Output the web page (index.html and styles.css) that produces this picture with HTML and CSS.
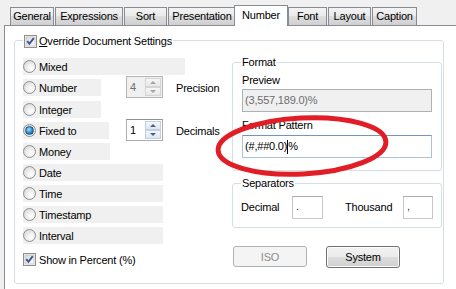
FILE: index.html
```html
<!DOCTYPE html>
<html>
<head>
<meta charset="utf-8">
<link rel="stylesheet" href="styles.css">
</head>
<body>
<div class="tabs">
  <div class="tab t-general">General</div>
  <div class="tab t-expr">Expressions</div>
  <div class="tab t-sort">Sort</div>
  <div class="tab t-pres">Presentation</div>
  <div class="tab sel t-num">Number</div>
  <div class="tab t-font">Font</div>
  <div class="tab t-layout">Layout</div>
  <div class="tab t-caption">Caption</div>
</div>
<div class="page">
  <div class="group outer">
    <div class="gtitle otitle">
      <svg class="check" width="13" height="13" viewBox="0 0 13 13"><defs><linearGradient id="cg" x1="0" y1="0" x2="1" y2="1"><stop offset="0" stop-color="#d9d9d9"/><stop offset="1" stop-color="#fbfbfb"/></linearGradient></defs><rect x="0.5" y="0.5" width="12" height="12" fill="#f4f4f4" stroke="#8f8f8f"/><rect x="2" y="2" width="9" height="9" fill="url(#cg)" stroke="#b9b9b9" stroke-width="0.6"/><path d="M3.3 6.2 L5.4 8.8 L9.8 3.2" fill="none" stroke="#3a5596" stroke-width="1.9"/></svg>
      <span><u>O</u>verride Document Settings</span>
    </div>
    <div class="left">
      <div class="row"><div class="opt w-mixed"><span class="radio"></span>Mixed</div></div>
      <div class="row spinrow mb1">
        <div class="opt w-num"><span class="radio"></span>Number</div>
        <div class="spin off"><span class="val">4</span><span class="btns"><span class="sbtn up"></span><span class="sbtn dn"></span></span></div>
        <span>Precision</span>
      </div>
      <div class="row"><div class="opt w-num"><span class="radio"></span>Integer</div></div>
      <div class="row spinrow">
        <div class="opt w-fixed"><span class="radio on"></span>Fixed to</div>
        <div class="spin"><span class="val">1</span><span class="btns"><span class="sbtn up"></span><span class="sbtn dn"></span></span></div>
        <span>Decimals</span>
      </div>
      <div class="row"><div class="opt w-money"><span class="radio"></span>Money</div></div>
      <div class="row"><div class="opt w-date"><span class="radio"></span>Date</div></div>
      <div class="row"><div class="opt w-date"><span class="radio"></span>Time</div></div>
      <div class="row"><div class="opt w-date"><span class="radio"></span>Timestamp</div></div>
      <div class="row"><div class="opt w-date"><span class="radio"></span>Interval</div></div>
      <div class="row pct">
        <svg class="check" width="13" height="13" viewBox="0 0 13 13"><rect x="0.5" y="0.5" width="12" height="12" fill="#f4f4f4" stroke="#8f8f8f"/><rect x="2" y="2" width="9" height="9" fill="url(#cg)" stroke="#b9b9b9" stroke-width="0.6"/><path d="M3.3 6.2 L5.4 8.8 L9.8 3.2" fill="none" stroke="#3a5596" stroke-width="1.9"/></svg>
        <span>Show in Percent (%)</span>
      </div>
    </div>
    <div class="right">
      <div class="group fmt">
        <div class="gtitle">Format</div>
        <div class="lbl">Preview</div>
        <div class="box ro box1">(3,557,189.0)%</div>
        <div class="lbl lbl2">Format Pattern</div>
        <div class="box pat">(#,##0.0)<span class="caret"></span>%</div>
      </div>
      <div class="group sep">
        <div class="gtitle">Separators</div>
        <span class="slbl l-dec">Decimal</span>
        <span class="sbox b-dec">.</span>
        <span class="slbl l-th">Thousand</span>
        <span class="sbox b-th">,</span>
      </div>
      <div class="btnrow">
        <div class="pbtn iso">ISO</div>
        <div class="pbtn sys">System</div>
      </div>
    </div>
  </div>
</div>
<svg class="annot" width="456" height="289" viewBox="0 0 456 289"><ellipse cx="302" cy="146" rx="84" ry="28" fill="none" stroke="#e11d26" stroke-width="5" transform="rotate(-3 302 146)"/></svg>
</body>
</html>
```
FILE: styles.css
```css
* { box-sizing: border-box; }
html, body { margin: 0; height: 289px; overflow: hidden; }
body {
  background: #f0f0f0;
  font: 11px "Liberation Sans", Arial, sans-serif;
  letter-spacing: -0.2px;
  color: #000;
  position: relative;
}
.tabs {
  display: flex;
  align-items: flex-end;
  height: 25px;
  padding-left: 10px;
}
.tab {
  height: 18px;
  border: 1px solid #898c95;
  border-bottom: 0;
  margin-right: 1px;
  background: linear-gradient(#f3f3f3, #ebebeb 45%, #dedede 50%, #d0d0d0);
  display: flex;
  align-items: center;
  justify-content: center;
  line-height: 1;
}
.t-general { width: 44px; }
.t-expr { width: 68px; }
.t-sort { width: 43px; }
.t-pres { width: 68px; }
.t-num { width: 54px; }
.t-font { width: 39px; }
.t-layout { width: 43px; }
.t-caption { width: 45px; }
.tab.sel {
  height: 21px;
  margin: 0 0 -1px -3px;
  background: #fff;
  position: relative;
  z-index: 1;
  padding-bottom: 2px;
}
.page {
  margin-left: 4px;
  border-top: 1px solid #898c95;
  border-left: 1px solid #898c95;
  background: #fff;
  height: 264px;
  padding: 14px 0 0 9px;
}
.group {
  border: 1px solid #d5dfe5;
  border-radius: 3px;
  position: relative;
}
.outer {
  width: 430px;
  height: 244px;
  display: flex;
  align-items: flex-start;
}
.gtitle {
  position: absolute;
  top: -7px;
  left: 8px;
  padding: 0 1px;
  background: #fff;
  height: 13px;
  line-height: 13px;
  display: flex;
  align-items: center;
  gap: 2px;
}
.otitle { top: -6px; }
.check { display: block; flex: none; }
.left {
  width: 217px;
  padding: 17px 0 0 8px;
  display: flex;
  flex-direction: column;
  gap: 4px;
}
.row {
  height: 17px;
  display: flex;
  align-items: center;
}
.mb1 { margin-bottom: 1px; }
.spinrow {
  display: grid;
  grid-template-columns: 90px 37px auto;
  column-gap: 13px;
  align-items: center;
}
.opt {
  height: 17px;
  background: #f0f0f0;
  display: flex;
  align-items: center;
  gap: 3px;
}
.w-mixed { width: 162px; }
.w-num { width: 78px; }
.w-fixed { width: 86px; }
.w-money { width: 87px; }
.w-date { width: 140px; }
.radio {
  width: 13px;
  height: 13px;
  flex: none;
  border-radius: 50%;
  border: 1px solid #8e8f8f;
  background: radial-gradient(circle at 65% 65%, #ffffff 0, #f1f1f1 35%, #cfcfcf 100%);
  position: relative;
  display: flex;
  align-items: center;
  justify-content: center;
}
.radio.on::after {
  content: "";
  width: 7px;
  height: 7px;
  border-radius: 50%;
  background: radial-gradient(circle at 40% 35%, #a9e0fb 0, #3b9ad8 45%, #0f4f8a 100%);
  border: 1px solid #1e4f7c;
}
.spin {
  height: 22px;
  margin: -3px 0 -2px;
  display: flex;
  border: 1px solid #abadb3;
  border-top-color: #8d9096;
  background: #fff;
  padding: 1px;
}
.spin .val {
  flex: 1;
  padding-left: 2px;
  line-height: 18px;
}
.spin .btns {
  width: 16px;
  display: flex;
  flex-direction: column;
}
.sbtn {
  flex: 1;
  border: 1px solid #c3cfdc;
  background: linear-gradient(#f3f7fb, #dce7f3);
  display: flex;
  align-items: center;
  justify-content: center;
}
.sbtn.up::after {
  content: "";
  border-left: 3px solid transparent;
  border-right: 3px solid transparent;
  border-bottom: 3px solid #4b5f86;
}
.sbtn.dn::after {
  content: "";
  border-left: 3px solid transparent;
  border-right: 3px solid transparent;
  border-top: 3px solid #4b5f86;
}
.spin.off {
  background: #f0f0f0;
  border-color: #b5b5b5;
  color: #6d6d6d;
}
.spin.off .sbtn {
  border-color: #d4d4d4;
  background: linear-gradient(#f6f6f6, #e8e8e8);
}
.spin.off .sbtn.up::after { border-bottom-color: #a3a3a3; }
.spin.off .sbtn.dn::after { border-top-color: #a3a3a3; }
.pct {
  margin-top: 3px;
  gap: 3px;
}
.right {
  width: 210px;
  margin-top: 21px;
  display: flex;
  flex-direction: column;
}
.fmt {
  height: 109px;
  padding: 11px 9px 0 9px;
}
.lbl {
  height: 13px;
  line-height: 13px;
}
.lbl2 { margin-top: 7px; }
.box {
  height: 23px;
  border: 1px solid #abadb3;
  padding-left: 2px;
  line-height: 21px;
  display: flex;
  align-items: center;
}
.box1 { margin-top: 2px; }
.pat { margin-top: 3px; border-color: #a9c3df; border-top-color: #6f97c2; }
.ro {
  background: #f0f0f0;
  border-color: #adb2b5;
  color: #6d6d6d;
}
.caret {
  display: inline-block;
  width: 1px;
  height: 14px;
  background: #000;
}
.sep {
  margin-top: 12px;
  height: 45px;
  padding: 12px 0 0 8px;
  display: flex;
  align-items: flex-start;
}
.slbl { line-height: 23px; }
.l-dec { width: 51px; }
.l-th { width: 58px; margin-left: 22px; }
.sbox {
  height: 23px;
  border: 1px solid #c5c9cf;
  border-top-color: #abadb3;
  line-height: 19px;
  padding-left: 3px;
  color: #1a2a8a;
}
.b-dec { width: 31px; }
.b-th { width: 30px; color: #6a2040; }
.btnrow {
  margin-top: 18px;
  display: flex;
  gap: 19px;
  padding-left: 1px;
  align-items: flex-start;
}
.pbtn {
  width: 74px;
  display: flex;
  align-items: center;
  justify-content: center;
  border-radius: 3px;
}
.iso {
  height: 21px;
  border: 1px solid #adb2b5;
  background: #f4f4f4;
  color: #8d8d8d;
}
.sys {
  height: 22px;
  border: 1px solid #707070;
  background: linear-gradient(#f2f2f2, #ebebeb 50%, #dddddd 50%, #cfcfcf);
  box-shadow: inset 0 0 0 1px #fcfcfc;
}
.annot {
  position: absolute;
  left: 0;
  top: 0;
  pointer-events: none;
}
```
